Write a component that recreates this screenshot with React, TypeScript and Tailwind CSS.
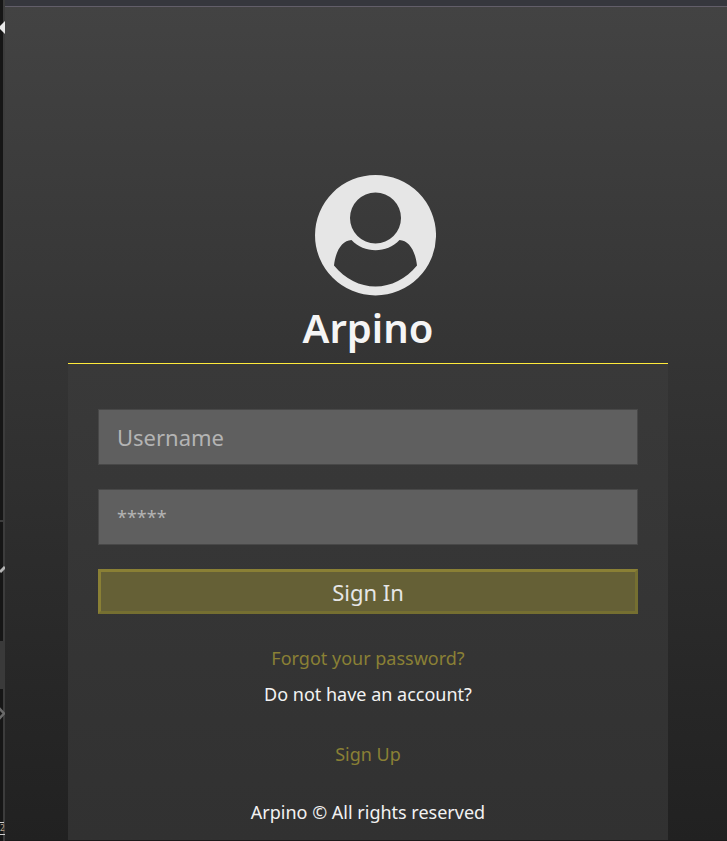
function BackgroundEdge() {
  return (
    <aside className="relative w-[5px] shrink-0 bg-[#161616]" aria-hidden="true">
      <svg className="absolute top-0 left-0" width="5" height="841" viewBox="0 0 5 841" fill="none">
        <path d="M3 0h2v841h-2z" fill="#3c3c3c" />
        <path d="M5 21L0 26V29L5 34Z" fill="#e8e8e8" />
        <path d="M0 521h5" stroke="#3c3c3c" strokeWidth="2" />
        <path d="M0 572L5 567" stroke="#b4b4b4" strokeWidth="3" />
        <path d="M0 641h5v48h-5z" fill="#3a3a3a" />
        <path d="M-1 708L4 713.5L-1 719" stroke="#6a6a6a" strokeWidth="2.5" />
        <path d="M0 822.5h4M0 834.500h5" stroke="#cfcfcf" />
      </svg>
      <span className="absolute top-[822px] left-0 text-[8px] leading-3 text-[#b9a58e]">2</span>
    </aside>
  );
}

function Avatar() {
  return (
    <svg className="ml-[15px] size-[121px]" viewBox="0 0 121 121" role="img" aria-label="User">
      <path
        fill="#e6e6e6"
        fillRule="evenodd"
        d="M60.500 0a60.500 60.200 0 1 1 0 120.400a60.500 60.200 0 0 1 0-120.400ZM60.500 17.500a25.500 25.500 0 1 0 0 51a25.500 25.500 0 0 0 0-51ZM36.500 65C27 65.500 20.500 76 19 90.500C30 104 45 111.500 60.500 111.500C76 111.500 91 104 102 90.500C100.500 76 94 65.500 84.500 65C78 72 69.500 75.200 60.500 75.200C51.500 75.200 43 72 36.500 65Z"
      />
    </svg>
  );
}

const field =
  "block h-14 w-full border border-[#484848] bg-[#5f5f5f] px-[18px] text-[22px] text-[#e8e8e8] outline-none placeholder:text-[#b4b4b4]";
const link = "text-[#8a8035] hover:underline";

export default function App() {
  return (
    <div className="flex min-h-screen font-['Noto_Sans','Open_Sans',sans-serif]">
      <BackgroundEdge />
      <div className="flex min-w-0 flex-1 flex-col">
        <div className="h-[6px] bg-[#36373d]" />
        <main className="flex flex-1 flex-col items-center border-y border-t-[#625e69] border-b-[#1b1b1b] bg-linear-to-b from-[#434343] to-[#212121] pt-[168px] pr-1 pl-2">
          <Avatar />
          <h1 className="pb-1 text-[40px] leading-[63px] font-semibold text-[#f5f5f5]">Arpino</h1>
          <section className="w-full max-w-[600px] flex-1 border-t border-[#ffeb3b] bg-linear-to-b from-[#393939] to-[#313131] px-[30px] pt-[45px] text-center text-lg leading-7 text-[#f2f2f2]">
            <form className="flex flex-col gap-6" onSubmit={(e) => e.preventDefault()}>
              <input className={field} type="text" placeholder="Username" aria-label="Username" />
              <input className={`${field} pb-1 placeholder:text-lg`} type="password" placeholder="*****" aria-label="Password" />
              <button
                type="submit"
                className="h-[45px] border-3 border-t-[#8a8035] border-r-[#756f31] border-b-[#756f31] border-l-[#8a8035] bg-[#656036] text-[22px] text-[#e6e6e6]"
              >
                Sign In
              </button>
            </form>
            <p className="mt-[30px]">
              <a className={link} href="#forgot">Forgot your password?</a>
            </p>
            <p className="mt-2">Do not have an account?</p>
            <p className="mt-8">
              <a className={link} href="#signup">Sign Up</a>
            </p>
            <footer className="mt-[30px]">Arpino © All rights reserved</footer>
          </section>
        </main>
      </div>
    </div>
  );
}
